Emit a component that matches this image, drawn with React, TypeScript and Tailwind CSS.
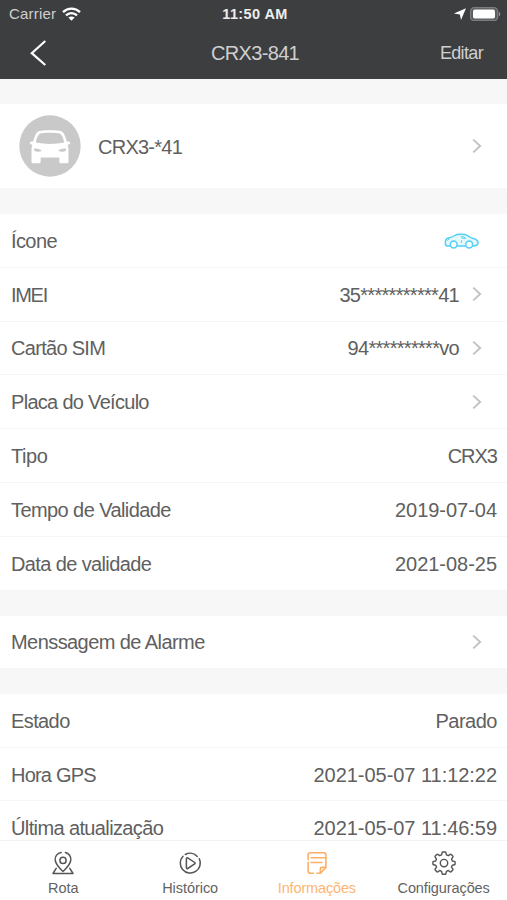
import React from 'react';

interface RowItem {
  label: string;
  labelClass?: string;
  value?: React.ReactNode;
  valueClass?: string;
  arrow?: boolean;
}

const ChevronRight: React.FC = () => (
  <svg className="h-4 w-[10px] shrink-0" viewBox="0 0 10 16" fill="none" stroke="#c2c2c2" strokeWidth="1.9">
    <path d="M1.2 1.6 8.2 8 1.2 14.4" />
  </svg>
);

const WifiIcon: React.FC = () => (
  <svg className="ml-[6px] mb-px h-[14px] w-[19px]" viewBox="0 0 19 14" fill="none" stroke="#fff" strokeWidth="2.4">
    <path d="M1 5.1C5.8.5 13.2.5 18 5.1" />
    <path d="M4 8.3c3.1-2.9 7.9-2.9 11 0" />
    <path d="M6.4 10.6c1.8-1.6 4.4-1.6 6.2 0L9.5 13.8z" fill="#fff" stroke="none" />
  </svg>
);

const StatusIcons: React.FC = () => (
  <svg className="mb-px h-[14px] w-[48px]" viewBox="0 0 48 14">
    <path d="M13 1.2 8 13 6.9 7.5.9 6.600z" fill="#fff" />
    <rect x="17.600" y=".7" width="27" height="12.8" rx="3.600" fill="#5b5c5e" stroke="#7c7d7f" strokeWidth="1.3" />
    <rect x="20" y="2.600" width="22" height="9" rx="1.800" fill="#fff" />
    <path d="M45.8 4.8c2 .6 2 4 0 4.6z" fill="#8f8f91" />
  </svg>
);

const DeviceAvatar: React.FC = () => (
  <svg className="h-[62px] w-[62px]" viewBox="0 0 62 62">
    <circle cx="31" cy="31" r="30.700" fill="#c9c9c9" />
    <path
      fill="#fff"
      d="M31 15.200c5.500 0 9 .3 10.800.9 2.800 1 4.600 5 6 10.500 2-.4 3.600.3 3.400 1.600-.2 1-1.300 1.400-2.700 1.500.7 1.400 1 3 1 5.300v11.200c0 1.400-.6 2-2 2h-5.200c-1.400 0-2-.6-2-2v-3.700H21.700v3.700c0 1.400-.6 2-2 2h-5.200c-1.400 0-2-.6-2-2V35c0-2.300.3-3.900 1-5.300-1.400-.1-2.500-.5-2.700-1.500-.2-1.300 1.400-2 3.400-1.600 1.400-5.500 3.200-9.500 6-10.500 1.800-.6 5.300-.9 10.800-.9z"
    />
    <path
      fill="#c9c9c9"
      d="M31 17.800c4.600 0 8 .2 9.600.8 2 .8 3.700 4.400 4.600 9-9 1.700-19.400 1.700-28.400 0 .9-4.600 2.600-8.200 4.600-9 1.600-.6 5-.8 9.600-.8zM15 33.600c3-.2 5.600.5 8 2.200-2.300 1.100-5.600 1.200-7.300.3-.6-.4-.9-1.400-.7-2.500zM47 33.600c-3-.2-5.600.5-8 2.200 2.300 1.100 5.600 1.200 7.300.3.600-.4.900-1.400.7-2.500z"
    />
  </svg>
);

const CarIcon: React.FC = () => (
  <svg
    className="mr-[18px] h-4 w-[35px]"
    viewBox="0 0 35 16"
    fill="none"
    stroke="#52d0f3"
    strokeWidth="1.5"
    strokeLinejoin="round"
  >
    <path
      fill="#e6f9fe"
      d="M6.200 12.900H3.200C1.700 12.900 1.300 11.700 1.300 10 1.300 7.200 2.200 5.300 4.600 4.900 7.100 4.500 8.800 3.900 10.700 2.500 12.500 1.200 20.200.6 23.700 2.700c1.800 1.100 2.500 2.200 4.500 2.600 3.500.7 5.800 1.800 5.800 4.400 0 2.200-1.200 3.200-4.900 3.200z"
    />
    <circle cx="9.700" cy="11.500" r="3.400" fill="#fff" />
    <circle cx="25.200" cy="11.500" r="3.400" fill="#fff" />
    <path d="M17.300 3.700h2.300l2 1.600h-3.300zM17.500 7.400v2.400M5.500 5.300 3.500 7.600" strokeWidth="1" />
  </svg>
);

const RouteIcon: React.FC = () => (
  <svg className="h-6 w-6" viewBox="0 0 24 24" fill="none" stroke="#555" strokeWidth="1.5" strokeLinecap="round" strokeLinejoin="round">
    <path d="M10.200 1.400C6.300 2 3.700 5.400 4.200 9.200c.5 3.700 4.100 7.900 7.800 11.300 3.700-3.400 7.300-7.600 7.800-11.300.5-3.600-2-6.900-5.400-7.700" />
    <circle cx="12" cy="9.400" r="3.100" />
    <path d="M5.200 17.400 2 22.500h20l-3.200-5.100" />
  </svg>
);

const HistoryIcon: React.FC = () => (
  <svg className="h-6 w-6" viewBox="0 0 24 24" fill="none" stroke="#555" strokeWidth="1.5" strokeLinecap="round" strokeLinejoin="round">
    <path d="M21.300 7.700A10 10 0 1 1 5 5.200M7.300 3.500A10 10 0 0 1 19.300 5.400" />
    <path d="M8.400 7.600v9.200c0 .7.700 1 1.300.7l7-4.600c.6-.4.600-1 0-1.400l-7-4.600c-.6-.3-1.300 0-1.300.7z" />
  </svg>
);

const InfoIcon: React.FC = () => (
  <svg className="h-6 w-6" viewBox="0 0 24 24" fill="none" stroke="#fdaf66" strokeWidth="1.6" strokeLinecap="round" strokeLinejoin="round">
    <path d="M8.500 22.300H5.400c-1.400 0-2.300-.9-2.300-2.300v-8.600M3.100 8.600V4c0-1.400.9-2.300 2.300-2.300h13.200c1.400 0 2.300.9 2.300 2.300v12.400l-5.500 5.900H12" />
    <path d="M15.400 22v-4.200c0-1 .4-1.400 1.400-1.400h4M6 6.700h14.500M6 11.500h11" />
  </svg>
);

const SettingsIcon: React.FC = () => (
  <svg className="h-6 w-6" viewBox="0 0 24 24" fill="none" stroke="#555" strokeWidth="1.4" strokeLinejoin="round">
    <path d="M10.800 1h2.400q.6 0 .7.6l.5 2.300 1.900.8 2-1.300q.5-.3.900.1l1.600 1.600q.4.400.1.900l-1.400 2.100.8 1.900 2.200.4q.600.1.600.7v1.900q0 .6-.6.700l-2.200.5-.8 1.900 1.400 2.100q.3.500-.1.900l-1.600 1.600q-.4.400-.9.100l-2-1.300-1.900.8-.5 2.300q-.1.600-.7.600h-2.400q-.6 0-.7-.6l-.5-2.300-1.900-.8-2 1.300q-.5.300-.9-.1l-1.600-1.600q-.4-.4-.1-.9l1.400-2.100-.8-1.900-2.200-.5q-.6-.1-.6-.7v-1.900q0-.6.600-.7l2.200-.4.8-1.900-1.400-2.100q-.3-.5.100-.9l1.600-1.600q.4-.4.900-.1l2 1.300 1.900-.8.500-2.300q.1-.6.700-.6z" />
    <circle cx="12" cy="12.100" r="3.700" />
  </svg>
);

const infoRows: RowItem[] = [
  { label: 'Ícone', labelClass: 'tracking-[-0.6px]', value: <CarIcon /> },
  { label: 'IMEI', labelClass: 'tracking-[-1.3px]', value: '35***********41', valueClass: 'tracking-[-0.7px]', arrow: true },
  { label: 'Cartão SIM', labelClass: 'tracking-[-0.7px]', value: '94**********vo', valueClass: 'tracking-[-0.7px]', arrow: true },
  { label: 'Placa do Veículo', labelClass: 'tracking-[-0.7px]', arrow: true },
  { label: 'Tipo', labelClass: 'tracking-[-0.4px]', value: 'CRX3', valueClass: 'tracking-[-1px]' },
  { label: 'Tempo de Validade', labelClass: 'tracking-[-0.58px]', value: '2019-07-04', valueClass: 'tracking-[-0.03px]' },
  { label: 'Data de validade', labelClass: 'tracking-[-0.62px]', value: '2021-08-25', valueClass: 'tracking-[-0.03px]' }
];

const statusRows: RowItem[] = [
  { label: 'Estado', labelClass: 'tracking-[-0.6px]', value: 'Parado', valueClass: 'tracking-[-0.5px]' },
  { label: 'Hora GPS', labelClass: 'tracking-[-0.8px]', value: '2021-05-07 11:12:22', valueClass: 'tracking-[-0.04px]' },
  { label: 'Última atualização', labelClass: 'tracking-[-0.62px]', value: '2021-05-07 11:46:59', valueClass: 'tracking-[-0.04px]' }
];

const tabs = [
  { label: 'Rota', icon: <RouteIcon />, className: 'text-[#636363] tracking-[0px]' },
  { label: 'Histórico', icon: <HistoryIcon />, className: 'text-[#636363] tracking-[-0.05px]' },
  { label: 'Informações', icon: <InfoIcon />, className: 'text-[#fdb572] tracking-[-0.15px]' },
  { label: 'Configurações', icon: <SettingsIcon />, className: 'text-[#636363] tracking-[-0.1px]' }
];

const Row: React.FC<RowItem> = ({ label, labelClass = '', value, valueClass = '', arrow }) => (
  <div className="flex h-[53.8px] shrink-0 items-center border-b border-[#f5f5f5] pl-[11px] pr-[10px]">
    <span className={`whitespace-nowrap pt-px ${labelClass}`}>{label}</span>
    <span className={`ml-auto whitespace-nowrap pt-px ${valueClass}`}>{value}</span>
    {arrow && (
      <span className="ml-[13px] mr-[15px]">
        <ChevronRight />
      </span>
    )}
  </div>
);

const App: React.FC = () => {
  return (
    <div className="flex h-[900px] w-[507px] flex-col overflow-hidden bg-[#f7f7f7] font-['Liberation_Sans',Arial,sans-serif] text-[20px] leading-6 text-[#606060]">
      <header className="h-[79px] shrink-0 bg-[#3d3e40] text-[#cfcfd0]">
        <div className="grid h-7 grid-cols-3 items-center pl-[9px] pr-[6px]">
          <div className="flex items-center text-[15px] tracking-[0.2px]">
            <span>Carrier</span>
            <WifiIcon />
          </div>
          <span className="text-center text-[14.5px] font-bold tracking-[0.4px] text-[#ededed]">11:50 AM</span>
          <div className="flex justify-end">
            <StatusIcons />
          </div>
        </div>
        <div className="grid h-[50px] grid-cols-3 items-center pl-[27px] pr-[24px]">
          <svg className="ml-[3px] h-[26px] w-4" viewBox="0 0 16 26" fill="none" stroke="#fff" strokeWidth="2.2">
            <path d="M15.300 1 1.800 13.200 15.300 25" />
          </svg>
          <h1 className="text-center text-[20px] tracking-[-0.65px]">CRX3-841</h1>
          <button className="text-right text-[18px] tracking-[-0.65px]">Editar</button>
        </div>
      </header>

      <main className="flex min-h-0 flex-1 flex-col overflow-hidden">
        <section className="mt-[25px] flex h-[84px] shrink-0 items-center bg-white pl-[19px] pr-[25px]">
          <DeviceAvatar />
          <span className="ml-[17px] mt-[2px] tracking-[-0.75px]">CRX3-*41</span>
          <span className="ml-auto">
            <ChevronRight />
          </span>
        </section>

        <section className="mt-[26px] shrink-0 bg-white">
          {infoRows.map((row) => (
            <Row key={row.label} {...row} />
          ))}
        </section>

        <section className="mt-[25px] shrink-0 bg-white">
          <Row label="Menssagem de Alarme" labelClass="tracking-[-0.57px]" arrow />
        </section>

        <section className="mt-[24.5px] shrink-0 bg-white">
          {statusRows.map((row) => (
            <Row key={row.label} {...row} />
          ))}
        </section>
      </main>

      <nav className="grid h-[60px] shrink-0 grid-cols-4 border-t border-[#f3f3f3] bg-white">
        {tabs.map((tab) => (
          <button key={tab.label} className={`flex flex-col items-center pt-[10px] text-[14.5px] leading-5 ${tab.className}`}>
            {tab.icon}
            <span className="mt-[3px]">{tab.label}</span>
          </button>
        ))}
      </nav>
    </div>
  );
};

export default App;
